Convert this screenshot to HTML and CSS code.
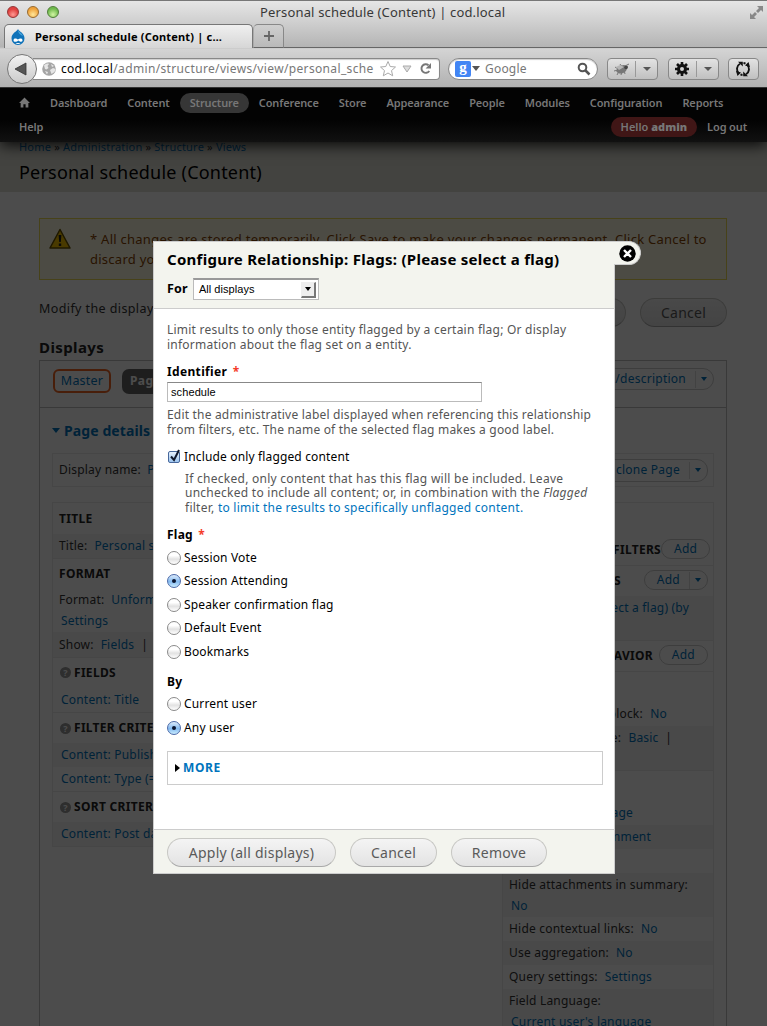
FILE: index.html
```html
<!DOCTYPE html>
<html lang="en">
<head>
<meta charset="utf-8">
<title>Personal schedule (Content) | cod.local</title>
<link rel="stylesheet" href="styles.css">
</head>
<body>
<div class="window">
  <header class="chrome">
    <div class="titlebar">
      <span class="light red"></span><span class="light amber"></span><span class="light green"></span>
      <span class="wintitle">Personal schedule (Content) | cod.local</span>
      <svg class="expand" width="15" height="15" viewBox="0 0 15 15"><path d="M8 1h6v6l-2-2-3 3-2-2 3-3zM7 14H1V8l2 2 3-3 2 2-3 3z" fill="#888"/></svg>
    </div>
    <div class="tabs">
      <div class="tab">
        <svg width="16" height="18" viewBox="0 0 16 18"><path d="M8 1c1 2.500 6.500 4 6.500 9.300A6.500 6.500 0 0 1 8 17 6.500 6.500 0 0 1 1.500 10.300C1.500 5 7 3.500 8 1z" fill="#0f72b9"/><path d="M8 2c1 2 4 3.500 5 6C10 7 8 5 8 2z" fill="#4aa6dc"/><path d="M3.500 12.200c0-2.400 3-2 4.500-.6 1.500-1.400 4.500-1.500 4.500.7 0 2-2 1.800-4.200.2-1.500 1.500-4.800 2-4.800-.3zM5.500 15c1.500 1.200 3.500 1.200 5 0z" fill="#fff"/></svg>
        <b class="tabtext">Personal schedule (Content) | c…</b>
      </div>
      <div class="newtab"><svg width="12" height="12" viewBox="0 0 12 12"><path d="M6 1v10M1 6h10" stroke="#666" stroke-width="1.800"/></svg></div>
      <div class="tabfill"></div>
    </div>
    <div class="navbar">
      <div class="back"><svg width="14" height="14" viewBox="0 0 14 14"><path d="M1 7 12 1v12z" fill="#555" stroke="#333" stroke-width=".8"/></svg></div>
      <div class="url">
        <svg class="globe" width="14" height="14" viewBox="0 0 14 14"><circle cx="7" cy="7" r="6.800" fill="#a5a5a5"/><path d="M2 3.500C4 1.500 6 1 7 2L5.500 4l1 2-2 1.500L3 7zM8 8l3-2 2.500 1-1 3-3 2zM9 2l3 2-2 1zM3 9l3 1-1 2.500z" fill="#e6e6e6"/></svg>
        <span class="addr"><span class="host">cod.local</span>/admin/structure/views/view/personal_sche</span>
        <svg class="star" width="18" height="17" viewBox="0 0 18 17"><path d="m9 1.500 2.200 5 5.300.5-4 3.600 1.200 5.200L9 13l-4.700 2.800 1.200-5.200-4-3.600 5.300-.5z" fill="#fff" stroke="#aaa"/></svg>
        <svg class="drop" width="10" height="8" viewBox="0 0 10 8"><path d="M1 1h8L5 7z" fill="#ddd" stroke="#aaa"/></svg>
        <svg class="reload" width="13" height="13" viewBox="0 0 13 13"><path d="M9.500 3.200A4.300 4.300 0 1 0 10.300 9" fill="none" stroke="#777" stroke-width="1.900"/><path d="M12 1v5.500H6.600z" fill="#777"/></svg>
      </div>
      <div class="search">
        <span class="g">g</span><i class="tri"></i><span class="google">Google</span>
        <svg width="14" height="14" viewBox="0 0 14 14"><circle cx="5.500" cy="5.500" r="3.800" fill="none" stroke="#555" stroke-width="2"/><path d="m8.500 8.500 4 4" stroke="#555" stroke-width="2.500"/></svg>
      </div>
      <div class="tool bug">
        <svg width="17" height="14" viewBox="0 0 17 14"><path d="M3 9c1-3 4-6 8-6l4 1-2 5c-3 3-6 3-8 2z" fill="#777"/><path d="m2 5 3 2M1 9l4-1M4 13l2-4M8 13l1-4M12 12l-1-4M7 2l2 3M12 4l4-2" stroke="#777"/><path d="m3 5 4-2 4 2-5 3z" fill="#b5b5b5"/><circle cx="13" cy="5.500" r="1.800" fill="#444"/></svg>
        <span class="sep"></span><i class="tri"></i>
      </div>
      <div class="tool gear">
        <svg width="14" height="14" viewBox="0 0 14 14"><circle cx="7" cy="7" r="3.500" fill="none" stroke="#111" stroke-width="3"/><path d="M7 0v3M7 11v3M0 7h3M11 7h3M2 2l2 2M10 10l2 2M2 12l2-2M10 4l2-2" stroke="#111" stroke-width="2.600"/></svg>
        <span class="sep"></span><i class="tri"></i>
      </div>
      <div class="tool sync">
        <svg width="16" height="16" viewBox="0 0 16 16"><path d="M4 12.500A6 6 0 0 1 5 2.800M12 3.500A6 6 0 0 1 11 13.200M8.500 2a6 6 0 0 1 2 .6M7.500 14a6 6 0 0 1-2-.6" fill="none" stroke="#111" stroke-width="1.900"/><path d="M3 .8h4.800v4.800zM13 15.200H8.200v-4.800zM1 10l5 1.500-3.500 3.500zM15 6l-5-1.500L13.500 1z" fill="#111"/></svg>
      </div>
    </div>
  </header>

  <main class="page">
    <section class="branding">
      <div class="crumbs"><a>Home</a> » <a>Administration</a> » <a>Structure</a> » <a>Views</a></div>
      <h1>Personal schedule (Content)</h1>
    </section>
    <section class="content">
      <div class="warning">
        <svg width="22" height="22" viewBox="0 0 22 22"><path d="M11 1.500 21 20H1z" fill="#f5c400" stroke="#665200" stroke-linejoin="round" stroke-width="1.500"/><path d="M9.600 7h2.800l-.6 7h-1.600zM9.800 15.500h2.400v2.400H9.800z" fill="#222"/></svg>
        <p>* All changes are stored temporarily. Click Save to make your changes permanent. Click Cancel to<br>discard your changes.</p>
      </div>
      <div class="modify"><span>Modify the display(s) of your view</span><span class="pill big save">Save</span><span class="pill big">Cancel</span></div>
      <h2>Displays</h2>
      <div class="displays">
        <div class="disphead"><span class="master">Master</span><span class="pagetab">Page</span><span class="split desc"><a>edit view name/description</a><i class="bar"></i><i class="tri"></i></span></div>
        <div class="details"><i class="tri"></i>Page details</div>
        <div class="namebox"><span>Display name: <a>Page</a></span><span class="split"><a>clone Page</a><i class="bar"></i><i class="tri"></i></span></div>
        <div class="columns">
          <div class="col left">
            <div class="row head h31">TITLE</div>
            <div class="row odd h24">Title: <a>Personal schedule</a></div>
            <div class="row head h30 rule">FORMAT</div>
            <div class="row h24">Format: <a>Unformatted list</a></div>
            <div class="row h20"><a class="in">Settings</a></div>
            <div class="row odd h25">Show: <a>Fields</a> |</div>
            <div class="row head h30 rule"><i class="q">?</i>FIELDS</div>
            <div class="row h25"><a class="in">Content: Title</a></div>
            <div class="row head h31 rule"><i class="q">?</i>FILTER CRITERIA</div>
            <div class="row odd h24"><a class="in">Content: Published (Yes)</a></div>
            <div class="row h24"><a class="in">Content: Type (= Session)</a></div>
            <div class="row head h31 rule"><i class="q">?</i>SORT CRITERIA</div>
            <div class="row odd h24"><a class="in">Content: Post date (desc)</a></div>
          </div>
          <div class="col right">
            <div class="row h31"></div>
            <div class="row head h31"><span class="ends w160">CONTEXTUAL FILTERS</span><span class="split add"><a>Add</a></span></div>
            <div class="row head h31 rule"><span class="ends w120">RELATIONSHIPS</span><span class="split add"><a>Add</a><i class="bar"></i><i class="tri"></i></span></div>
            <div class="row odd h44 top"><a class="ends w188">Flags: (select a flag) (by</a></div>
            <div class="row head h31 rule"><span class="ends w152">EXPOSED BEHAVIOR</span><span class="split add"><a>Add</a></span></div>
            <div class="row h30 rule"></div>
            <div class="row h25"><span class="ends w166">Exposed in block: <a>No</a></span></div>
            <div class="row odd h44 top"><span class="ends w170">Form style: <a>Basic</a> &nbsp;|</span></div>
            <div class="row h31 rule"></div>
            <div class="row h24"><a class="ends w132">Manage page</a></div>
            <div class="row odd h24"><a class="ends w150">Manage comment</a></div>
            <div class="row h24"></div>
            <div class="row odd h24">Hide attachments in summary:</div>
            <div class="row odd h20"><a class="in">No</a></div>
            <div class="row h24">Hide contextual links: <a>No</a></div>
            <div class="row odd h24">Use aggregation: <a>No</a></div>
            <div class="row h24">Query settings: <a>Settings</a></div>
            <div class="row odd h24">Field Language:</div>
            <div class="row odd h20"><a class="in">Current user's language</a></div>
          </div>
        </div>
      </div>
    </section>
  </main>
  <div class="overlay"></div>
  <nav class="toolbar">
    <div class="tbrow">
      <span class="home"><svg width="12" height="11" viewBox="0 0 12 11"><path d="M6 0 0 6h1.800v5h3V7.500h2.400V11h3V6H12z" fill="#777"/></svg></span><span>Dashboard</span><span>Content</span><span class="active">Structure</span><span>Conference</span><span>Store</span><span>Appearance</span><span>People</span><span>Modules</span><span>Configuration</span><span>Reports</span>
    </div>
    <div class="tbrow second"><span>Help</span><span class="hello">Hello <b>admin</b></span><span>Log out</span></div>
  </nav>
  <div class="modal" role="dialog">
    <div class="mhead">
      <h3>Configure Relationship: Flags: (Please select a flag)</h3>
      <div class="for"><b>For</b><span class="select">All displays<i class="arrow"></i></span></div>
    </div>
    <div class="mbody">
      <p class="help">Limit results to only those entity flagged by a certain flag; Or display<br>information about the flag set on a entity.</p>
      <div class="label ident">Identifier <em>*</em></div>
      <div class="input">schedule</div>
      <p class="help edit">Edit the administrative label displayed when referencing this relationship<br>from filters, etc. The name of the selected flag makes a good label.</p>
      <div class="opt check"><span class="box"><svg width="13" height="14" viewBox="0 0 13 14"><path d="m3 7.500 3 3.500 5-10" fill="none" stroke="#10182c" stroke-width="2"/></svg></span>Include only flagged content</div>
      <p class="help indent">If checked, only content that has this flag will be included. Leave<br>unchecked to include all content; or, in combination with the <i>Flagged</i><br>filter, <a>to limit the results to specifically unflagged content.</a></p>
      <div class="label flag">Flag <em>*</em></div>
      <div class="opt"><i class="radio"></i>Session Vote</div>
      <div class="opt"><i class="radio on"></i>Session Attending</div>
      <div class="opt"><i class="radio"></i>Speaker confirmation flag</div>
      <div class="opt"><i class="radio"></i>Default Event</div>
      <div class="opt"><i class="radio"></i>Bookmarks</div>
      <div class="label by">By</div>
      <div class="opt"><i class="radio"></i>Current user</div>
      <div class="opt"><i class="radio on"></i>Any user</div>
      <div class="more"><i></i>MORE</div>
    </div>
    <div class="mfoot"><span class="pill big apply">Apply (all displays)</span><span class="pill big cancel">Cancel</span><span class="pill big remove">Remove</span></div>
  </div>
  <div class="close"><svg width="17" height="17" viewBox="0 0 17 17"><circle cx="8.500" cy="8.500" r="8.200" fill="#000"/><path d="m5 5 7 7M12 5l-7 7" stroke="#fff" stroke-width="2.400"/></svg></div>
</div>
</body>
</html>
```
FILE: styles.css
```css
* { box-sizing: border-box; }
body { margin: 0; font: 12px/20px "Noto Sans", "Open Sans", sans-serif; letter-spacing: .2px; color: #333; background: #4c4c4c; }
a { color: #0074bd; }
p, h1, h2, h3 { margin: 0; }
.window { position: relative; width: 767px; height: 1026px; overflow: hidden; white-space: nowrap; }
.tri { width: 0; height: 0; flex: none; border: 4px solid transparent; border-top: 5px solid #555; border-bottom: 0; }

/* browser chrome */
.chrome { height: 88px; background: linear-gradient(#e6e6e6, #b4b4b4 46px, #d4d4d4 48px, #b0b0b0 87px); border-top: 1px solid #777; border-bottom: 1px solid #333; }
.titlebar { display: flex; height: 23px; padding-left: 7px; align-items: center; gap: 8px; }
.light { width: 12px; height: 12px; border-radius: 50%; border: 1px solid #7b5a55; flex: none; margin-top: -1px; }
.red { background: radial-gradient(circle at 50% 75%, #ff9b94, #e0413f 60%); border-color: #943535; }
.amber { background: radial-gradient(circle at 50% 75%, #ffe79a, #efa23a 65%); border-color: #98692c; }
.green { background: radial-gradient(circle at 50% 75%, #d3f5a4, #6fb94c 65%); border-color: #4f7d38; }
.wintitle { margin-left: 193px; font-size: 13px; color: #383838; letter-spacing: .16px; margin-top: -1px; }
.expand { margin-left: auto; margin-right: 3px; }
.tabs { display: flex; height: 24px; align-items: stretch; }
.tab { margin-left: 4px; width: 249px; height: 24px; display: flex; align-items: center; gap: 9px; padding-left: 5px; border: 1px solid #777; border-bottom: 0; border-radius: 5px 5px 0 0; background: linear-gradient(#f0f0f0, #d6d6d6); color: #000; }
.tabtext { font-size: 11px; letter-spacing: .19px; }
.newtab { width: 31px; display: flex; align-items: center; justify-content: center; border: 1px solid #888; border-left-color: #aaa; border-bottom-color: #666; border-radius: 5px 5px 0 0; background: linear-gradient(#cfcfcf, #b9b9b9); }
.tabfill { flex: 1; border-bottom: 1px solid #666; }
.navbar { display: flex; height: 39px; align-items: center; padding-left: 7px; padding-top: 2px; }
.back { width: 30px; height: 30px; border-radius: 50%; border: 1px solid #777; background: linear-gradient(#f2f2f2, #cbcbcb); display: flex; align-items: center; justify-content: center; z-index: 1; flex: none; padding-right: 3px; }
.url { width: 407px; height: 22px; margin-left: -4px; border: 1px solid #888; border-left: 0; border-radius: 0 4px 4px 0; background: #fff; display: flex; align-items: center; padding-left: 9px; box-shadow: inset 0 1px 1px #ccc; flex: none; }
.addr { margin-left: 5px; width: 314px; color: #777; letter-spacing: .35px; overflow: hidden; }
.host { color: #000; letter-spacing: .3px; }
.star { margin-left: 4px; } .drop { margin-left: 5px; } .reload { margin-left: 7px; }
.search { width: 150px; height: 22px; margin-left: 8px; border: 1px solid #888; border-radius: 11px; background: #fff; display: flex; align-items: center; padding-left: 6px; box-shadow: inset 0 1px 1px #ccc; flex: none; }
.g { width: 16px; height: 16px; border-radius: 2px; background: #4285f4; color: #fff; font: bold 15px/13px "Liberation Serif", serif; text-align: center; letter-spacing: 0; }
.search .tri { margin-left: 1px; }
.google { margin-left: 5px; width: 92px; color: #777; }
.tool { height: 22px; width: 51px; border: 1px solid #888; border-radius: 4px; background: linear-gradient(#e2e2e2, #c0c0c0); display: flex; align-items: center; padding-left: 5px; flex: none; }
.tool .tri { margin-left: 7px; border-width: 4px 4px 0; }
.sep { width: 1px; height: 16px; background: #999; margin-left: 5px; }
.bug { margin-left: 9px; } .gear { margin-left: 10px; padding-left: 6px; } .gear .sep { margin-left: 7px; }
.sync { width: 31px; margin-left: 9px; padding-left: 6px; }

/* administration toolbar */
.toolbar { position: absolute; top: 88px; left: 0; right: 0; height: 54px; padding: 5px 10px 0 9px; background: linear-gradient(#030303 60%, #111); box-shadow: 0 3px 14px rgba(0, 0, 0, .9); clip-path: inset(0 0 -30px 0); color: #777; font-size: 11px; font-weight: 600; letter-spacing: -.13px; }
.tbrow { display: flex; height: 20px; line-height: 20px; }
.tbrow span { padding: 0 10px; }
.tbrow .home { width: 31px; display: flex; align-items: center; padding-bottom: 2px; }
.tbrow .active { background: #363636; border-radius: 10px; }
.second { margin-top: 4px; }
.tbrow .hello { margin-left: auto; background: #401616; border-radius: 10px; letter-spacing: 0; }

/* page under the dimming layer */
.page { height: 938px; background: #fff; overflow: hidden; }
.branding { height: 104px; background: #e0e0d8; padding: 49px 19px 0; }
.crumbs { font-size: 11px; line-height: 20px; letter-spacing: .2px; height: 20px; }
h1 { font-size: 18px; font-weight: normal; line-height: 31px; color: #000; letter-spacing: .21px; }
.content { padding: 26px 40px 0 39px; }
.warning { height: 62px; display: flex; background: #fffce5; border: 1px solid #ed5; padding: 9px 0 0 9px; color: #840; }
.warning p { margin-left: 19px; font-size: 13px; letter-spacing: .26px; line-height: 20px; padding-top: 1px; }
.modify { height: 29px; margin-top: 18px; display: flex; line-height: 21px; letter-spacing: .4px; font-size: 12.500px; }
.modify > span:first-child { flex: 1; overflow: hidden; }
.pill { display: block; text-align: center; border: 1px solid #c8c8c4; border-bottom: 1px solid #a9a9a9; border-radius: 15px; background: linear-gradient(#f4f4f4, #e3e3e3); color: #5a5a5a; height: 29px; line-height: 27px; font-size: 14px; letter-spacing: .25px; }
.modify .pill { width: 87px; margin-left: 14px; }
h2 { font-size: 15px; line-height: 20px; margin-top: 10px; letter-spacing: .4px; color: #222; }
.displays { height: 700px; margin-top: 3px; border: 1px solid #c0c0c0; padding: 0 12px; }
.disphead { height: 47px; border-bottom: 1px solid #c0c0c0; margin: 0 -12px; padding: 8px 12px 0 13px; display: flex; }
.master { width: 58px; height: 24px; border: 2px solid #f26522; border-radius: 6px; color: #0074bd; text-align: center; line-height: 20px; font-size: 12.500px; }
.pagetab { width: 58px; height: 25px; margin-left: 11px; background: #666; color: #fff; border-radius: 7px; padding-left: 8px; line-height: 24px; font-weight: bold; letter-spacing: .4px; }
.split { margin-left: auto; height: 23px; border: 1px solid #ccc; border-radius: 11px; display: flex; align-items: center; padding: 0 6px 0 12px; line-height: 20px; flex: none; letter-spacing: .25px; }
.split .bar { width: 1px; height: 17px; background: #ddd; margin-left: 9px; }
.split .tri { margin-left: 5px; border-top-color: #0074bd; border-width: 4px 3.500px 0; }
.desc { height: 22px; margin-top: -1px; }
.details { height: 45px; line-height: 46px; font-size: 14px; font-weight: bold; color: #0074bd; display: flex; align-items: center; gap: 4px; letter-spacing: .1px; }
.details .tri { border-top-color: #0074bd; border-width: 5px 4px 0; }
.namebox { height: 34px; border: 1px solid #ececec; padding: 0 5px 0 6px; display: flex; align-items: center; }
.columns { display: flex; justify-content: space-between; align-items: flex-start; margin-top: 15px; }
.col { width: 212px; border: 1px solid #ececec; }
.left { width: 215px; }
.row { padding: 0 5px 0 6px; display: flex; align-items: center; gap: 7px; overflow: hidden; }
.row a.in { margin-left: 2px; }
.h20 a.in { padding-bottom: 3px; }
.head { font-weight: bold; color: #222; gap: 0; letter-spacing: .3px; }
.odd { background: #f5f5f5; }
.rule { border-top: 1px solid #ececec; }
.top { align-items: flex-start; padding-top: 2px; }
.h20 { height: 20px; } .h24 { height: 24px; } .h25 { height: 25px; } .h30 { height: 30px; }
.h31 { height: 31px; } .h44 { height: 44px; }
.q { width: 11px; height: 11px; border-radius: 50%; background: #999; color: #fff; font: bold 9px/11px "Noto Sans", sans-serif; text-align: center; margin: 0 3px 0 1px; letter-spacing: 0; }
.ends { text-align: right; flex: none; margin-left: -8px; }
.w120 { width: 120px; } .w132 { width: 132px; } .w150 { width: 150px; } .w152 { width: 152px; }
.w160 { width: 160px; } .w166 { width: 166px; } .w170 { width: 171px; } .w188 { width: 188px; }
.ends a { margin-left: 4px; }
.add { height: 20px; font-weight: normal; margin-top: -2px; }
.add a:only-child { margin-right: 6px; }
.namebox a { margin-left: 3px; }
.overlay { position: absolute; top: 88px; left: 0; right: 0; bottom: 0; background: rgba(0, 0, 0, .7); }

/* dialog */
.modal { position: absolute; left: 153px; top: 241px; width: 462px; height: 633px; border: 1px solid #ccc; background: #fff; color: #000; }
.close { position: absolute; left: 614px; top: 241px; width: 27px; height: 24px; background: #f3f4ee; border: 1px solid #ccc; border-left: 0; border-radius: 0 12px 12px 0; display: flex; align-items: center; justify-content: flex-end; padding-right: 4px; }
.mhead { height: 67px; background: #f3f4ee; border-bottom: 1px solid #ccc; padding: 8px 13px 0; }
h3 { font-size: 15px; line-height: 20px; letter-spacing: .27px; margin-top: -1px; }
.for { display: flex; margin-top: 9px; align-items: center; gap: 5px; height: 22px; font-size: 12.500px; }
.select { width: 126px; height: 22px; border: 1px solid #bbb; border-top: 2px solid #999; background: #fff; font: 11px/19px "Liberation Sans", sans-serif; letter-spacing: .05px; padding-left: 5px; display: flex; justify-content: space-between; }
.arrow { width: 15px; height: 16px; margin: 2px 2px 0 0; background: #eee; border: 1px solid #eee; border-right: 2px solid #777; border-bottom: 2px solid #777; display: flex; }
.arrow::after { content: ""; margin: 4px 0 0 3px; height: 0; border: 3px solid transparent; border-top: 4px solid #000; border-bottom: 0; }
.mbody { padding: 13px 11px 0 13px; height: 520px; }
.help { color: #555; line-height: 15px; letter-spacing: .23px; }
.label { font-weight: bold; letter-spacing: .25px; line-height: 18px; }
.label em { color: #f43b2a; font-style: normal; margin-left: 2px; }
.ident { margin-top: 11px; letter-spacing: .35px; }
.input { width: 315px; height: 20px; margin-top: 1px; border: 1px solid #bbb; border-top-color: #888; font: 11px/18px "Liberation Sans", sans-serif; padding-left: 3px; letter-spacing: .1px; }
.edit { margin-top: 5px; letter-spacing: .19px; }
.opt { height: 23.500px; display: flex; align-items: center; gap: 3px; letter-spacing: .15px; }
.check { margin-top: 8px; }
.box { width: 12px; height: 12px; margin: 0 1px; border: 1px solid #47689c; border-radius: 2px; background: linear-gradient(#e6f1fd, #9dc5ef); display: block; }
.box svg { display: block; margin: -3px 0 0 -1px; overflow: visible; }
.indent { margin: 3px 0 0 18px; letter-spacing: .26px; line-height: 14.500px; }
.flag { margin-top: 11px; margin-bottom: 2px; }
.radio { width: 14px; height: 14px; border: 1px solid #8a8a8a; border-radius: 50%; background: linear-gradient(#fff 30%, #e2e2e2 60%, #fff); display: flex; align-items: center; justify-content: center; }
.on { border-color: #4c6aa8; background: linear-gradient(#dcebfb, #84baf0 55%, #c9ecff); }
.on::after { content: ""; width: 4px; height: 4px; border-radius: 50%; background: #0a1530; }
.by { margin-top: 9px; margin-bottom: 2px; }
.more { height: 34px; margin-top: 11px; border: 1px solid #ccc; display: flex; align-items: center; padding: 1px 0 0 7px; gap: 3px; color: #0074bd; font-weight: bold; letter-spacing: .6px; }
.more i { border: 4px solid transparent; border-left: 5px solid #000; border-right: 0; }
.mfoot { height: 44px; border-top: 1px solid #ccc; background: #f3f4ee; padding: 8px 13px 0; display: flex; gap: 14px; }
.apply { width: 169px; } .cancel { width: 87px; } .remove { width: 96px; }
```
